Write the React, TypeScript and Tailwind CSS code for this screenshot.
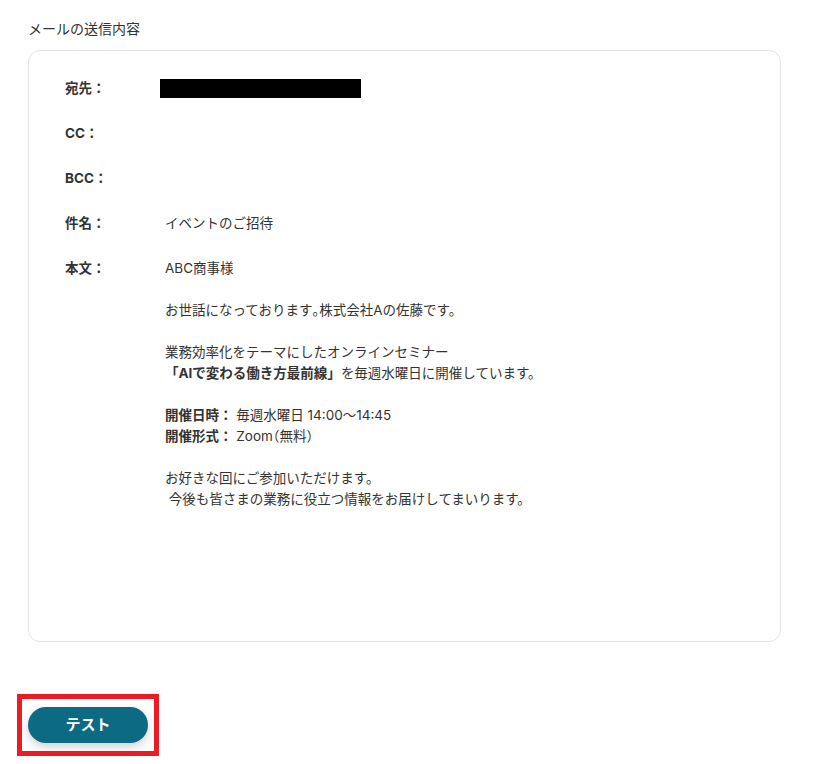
const FONT = "font-['Inter','Noto_Sans_CJK_JP',sans-serif]"

const FIELDS = [
  { label: "宛先：", redacted: true },
  { label: "CC：" },
  { label: "BCC：" },
  { label: "件名：", value: "イベントのご招待" },
]

// half-width punctuation, as the reference's font renders it
function H({ children }: { children: string }) {
  return <span className="[font-feature-settings:'halt']">{children}</span>
}

function BodyText() {
  return (
    <div className="leading-[21px]">
      <p>ABC商事様</p>
      <p className="mt-[21px]">
        お世話になっております<H>。</H>株式会社Aの佐藤です。
      </p>
      <p className="mt-[21px]">業務効率化をテーマにしたオンラインセミナー</p>
      <p>
        <span className="font-bold">「AIで変わる働き方最前線」</span>を毎週水曜日に開催しています。
      </p>
      <p className="mt-[21px]">
        <span className="font-bold">開催日時：</span> 毎週水曜日 14:00〜14:45
      </p>
      <p>
        <span className="font-bold">開催形式：</span> Zoom<H>（</H>無料<H>）</H>
      </p>
      <p className="mt-[21px]">お好きな回にご参加いただけます。</p>
      <p>&nbsp;今後も皆さまの業務に役立つ情報をお届けしてまいります。</p>
    </div>
  )
}

export default function App() {
  return (
    <div className={`${FONT} min-h-[764px] w-[833px] bg-white text-[13.5px] text-[#333]`}>
      <div className="px-[28px] pt-[18px]">
        <h2 className="text-[14px] leading-[21px] text-[#333]">メールの送信内容</h2>

        <div className="mt-[11px] h-[592px] w-[753px] rounded-[12px] border border-[#e3e3e3] px-[36px] pt-[27px]">
          <div className="flex flex-col gap-[24px]">
            {FIELDS.map((f) => (
              <div key={f.label} className="flex leading-[21px]">
                <div className="w-[100px] shrink-0 font-bold">{f.label}</div>
                {f.redacted ? (
                  <div className="mt-[1px] h-[19px] w-[201px] -ml-[5px] bg-black" />
                ) : (
                  <div>{f.value}</div>
                )}
              </div>
            ))}
            <div className="flex leading-[21px]">
              <div className="w-[100px] shrink-0 font-bold">本文：</div>
              <BodyText />
            </div>
          </div>
        </div>
      </div>

      <div className="ml-[17px] mt-[52px] inline-block border-[5px] border-[#ec1c24] px-[6px] py-[8px]">
        <button className="flex h-[36px] w-[120px] items-center justify-center rounded-full bg-[#0c6a82] text-[15px] font-bold text-white shadow-[0_4px_10px_rgba(0,0,0,0.18)]">
          テスト
        </button>
      </div>
    </div>
  )
}
